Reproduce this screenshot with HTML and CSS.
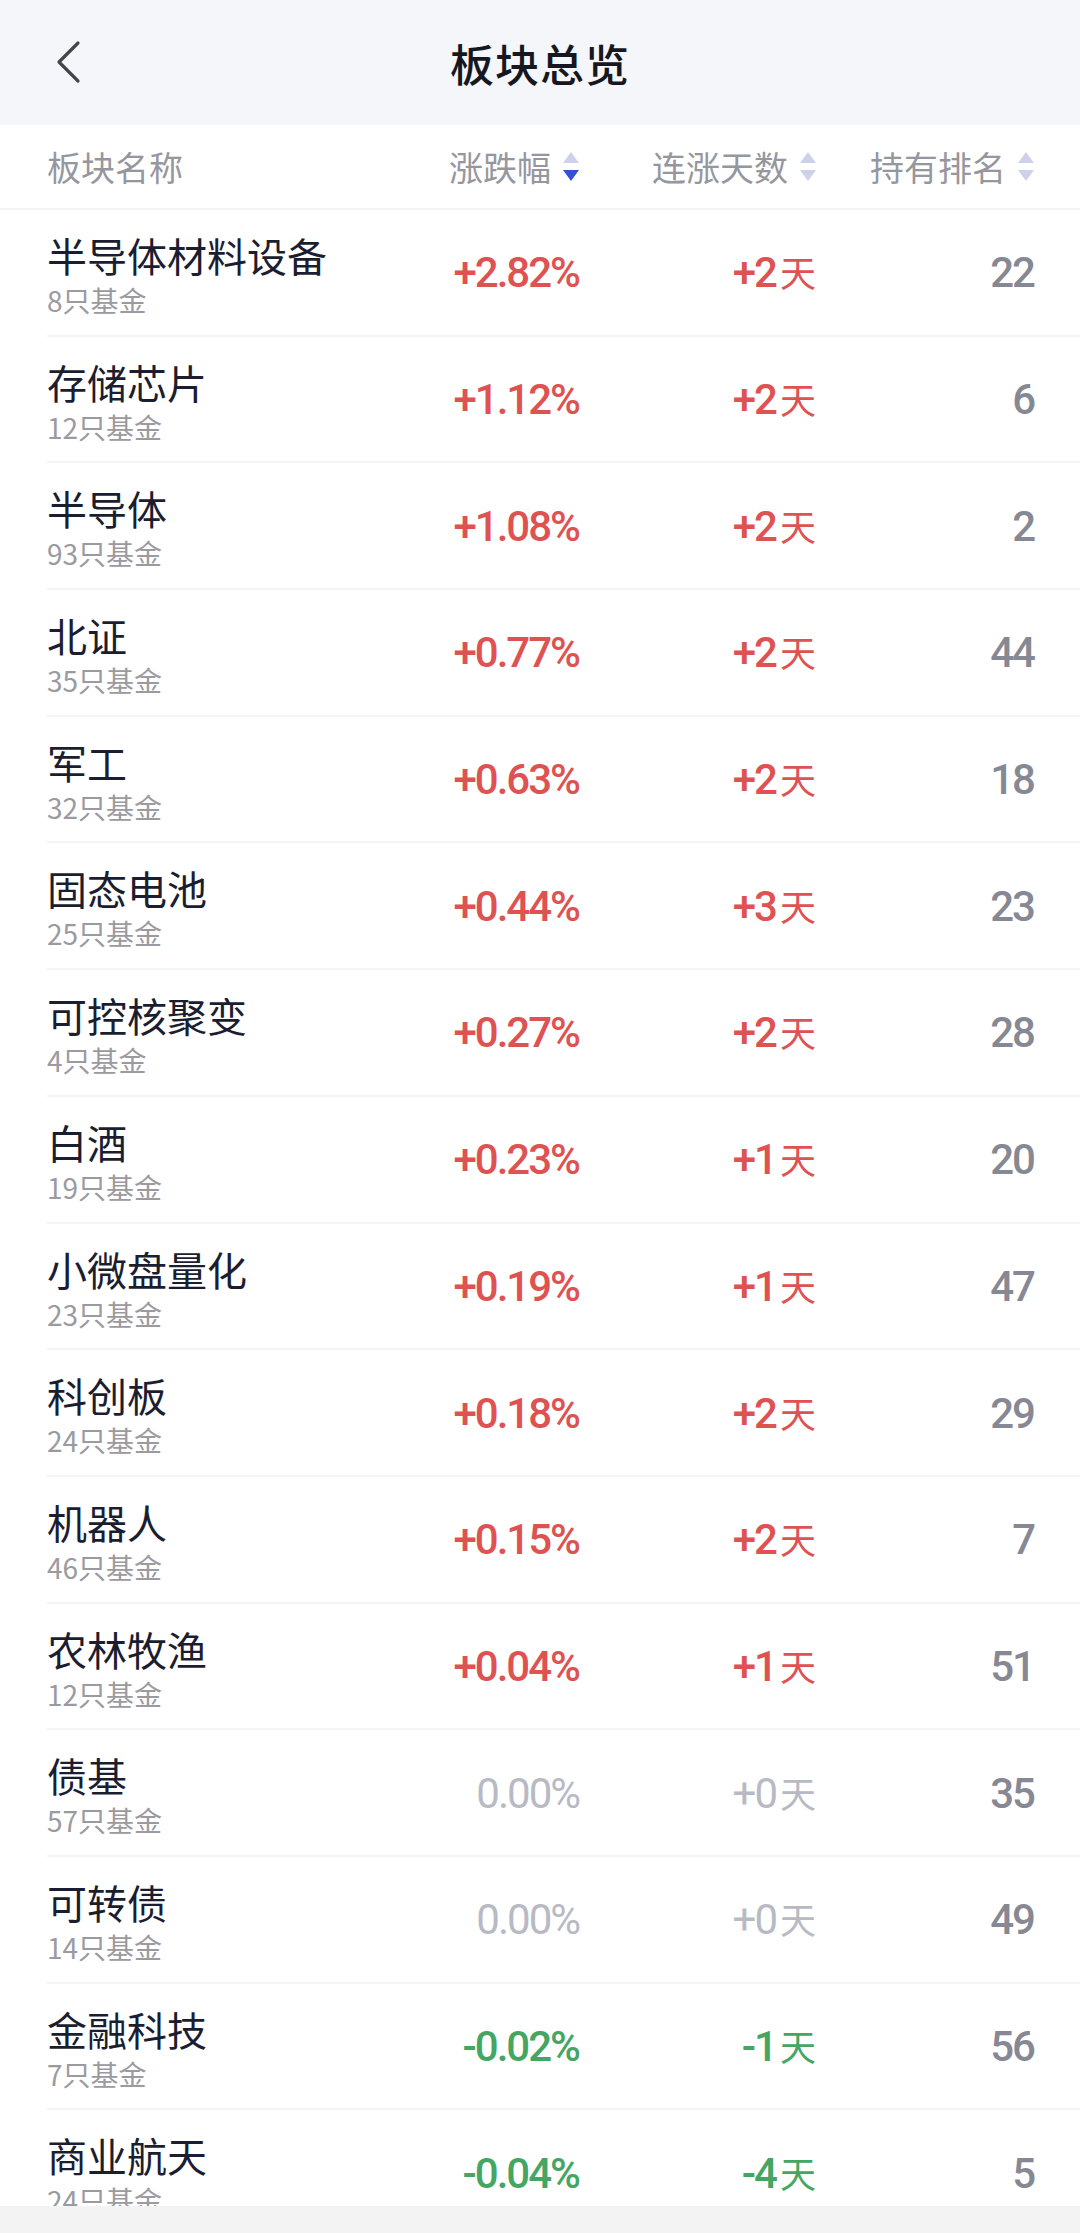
FILE: index.html
```html
<!DOCTYPE html>
<html lang="zh-CN">
<head>
  <meta charset="UTF-8" />
  <meta name="viewport" content="width=device-width, initial-scale=1.0"/>
  <title>板块总览</title>
  <link rel="stylesheet" href="styles.css">
</head>
<body>
  <div class="page">
    <header class="topbar">
      <span class="back">
        <svg width="30" height="44" viewBox="0 0 30 44"><polyline points="25,3 6,22 25,41" fill="none" stroke="#43454d" stroke-width="3.2" stroke-linecap="round" stroke-linejoin="round"/></svg>
      </span>
      <h1>板块总览</h1>
    </header>

    <div class="thead">
      <div class="th name">板块名称</div>
      <div class="th">涨跌幅<i class="sort down"></i></div>
      <div class="th">连涨天数<i class="sort"></i></div>
      <div class="th">持有排名<i class="sort"></i></div>
    </div>

    <div class="list" id="list"></div>

    <div class="bottombar"></div>
  </div>

  <script>
    const rows = [
      ['半导体材料设备', 8, '+2.82%', '+2', 22],
      ['存储芯片', 12, '+1.12%', '+2', 6],
      ['半导体', 93, '+1.08%', '+2', 2],
      ['北证', 35, '+0.77%', '+2', 44],
      ['军工', 32, '+0.63%', '+2', 18],
      ['固态电池', 25, '+0.44%', '+3', 23],
      ['可控核聚变', 4, '+0.27%', '+2', 28],
      ['白酒', 19, '+0.23%', '+1', 20],
      ['小微盘量化', 23, '+0.19%', '+1', 47],
      ['科创板', 24, '+0.18%', '+2', 29],
      ['机器人', 46, '+0.15%', '+2', 7],
      ['农林牧渔', 12, '+0.04%', '+1', 51],
      ['债基', 57, '0.00%', '+0', 35],
      ['可转债', 14, '0.00%', '+0', 49],
      ['金融科技', 7, '-0.02%', '-1', 56],
      ['商业航天', 24, '-0.04%', '-4', 5]
    ];

    const list = document.getElementById('list');

    function tone(v) {
      if (v.startsWith('+') && v !== '+0') return 'up';
      if (v.startsWith('-')) return 'down';
      return 'flat';
    }

    rows.forEach(([name, count, pct, days, rank]) => {
      const row = document.createElement('div');
      row.className = 'row';
      const pctTone = pct === '0.00%' ? 'flat' : tone(pct);
      row.innerHTML = `
        <div class="cell name">
          <div class="title">${name}</div>
          <div class="sub">${count}只基金</div>
        </div>
        <div class="cell num ${pctTone}">${pct}</div>
        <div class="cell num ${tone(days)}">${days}<span class="unit">天</span></div>
        <div class="cell num rank">${rank}</div>`;
      list.appendChild(row);
    });
  </script>
</body>
</html>
```

FILE: styles.css
```css
* { box-sizing: border-box; }
body {
  margin: 0;
  font-family: "Noto Sans CJK SC", "Noto Sans", sans-serif;
  background: #fff;
}
.page {
  width: 1080px;
  height: 2233px;
  display: flex;
  flex-direction: column;
  overflow: hidden;
}
.topbar {
  height: 125px;
  flex: none;
  background: #f5f6fa;
  display: flex;
  align-items: center;
  justify-content: center;
  position: relative;
}
.back {
  position: absolute;
  left: 53px;
  top: 40px;
  width: 30px;
  height: 44px;
}
.topbar h1 {
  margin: 0;
  font-size: 44px;
  font-weight: 500;
  color: #17181f;
  letter-spacing: 1px;
}
.thead, .row {
  display: grid;
  grid-template-columns: 1fr 200px 237px 218px;
  padding: 0 46px 0 47px;
}
.thead {
  height: 85px;
  flex: none;
  align-items: center;
  border-bottom: 2px solid #f1f1f4;
}
.th {
  display: flex;
  align-items: center;
  justify-content: flex-end;
  font-size: 34px;
  color: #96979e;
}
.th.name { justify-content: flex-start; }
.sort {
  width: 16px;
  height: 34px;
  margin-left: 12px;
  display: flex;
  flex-direction: column;
  justify-content: center;
  gap: 7px;
}
.sort::before, .sort::after {
  content: "";
  width: 0;
  height: 0;
  border-left: 8px solid transparent;
  border-right: 8px solid transparent;
}
.sort::before { border-bottom: 11px solid #cfd1ea; }
.sort::after { border-top: 11px solid #cfd1ea; }
.sort.down::after { border-top-color: #3550d6; }
.list {
  flex: 1;
  overflow: hidden;
}
.row {
  height: 126.7px;
  align-items: center;
  position: relative;
}
.row::after {
  content: "";
  position: absolute;
  left: 47px;
  right: 0;
  bottom: 0;
  border-bottom: 2px solid #f4f4f6;
}
.cell.name {
  align-self: start;
  padding-top: 23px;
}
.title {
  font-size: 40px;
  line-height: 44px;
  color: #1b1d30;
}
.sub {
  font-size: 28px;
  line-height: 32px;
  margin-top: 7px;
  color: #9a9aa0;
}
.num {
  text-align: right;
  font-family: Roboto, "Noto Sans CJK SC", sans-serif;
  font-size: 42px;
  font-weight: 500;
  letter-spacing: -2px;
  line-height: 1;
}
.unit {
  font-family: "Noto Sans CJK SC", sans-serif;
  font-size: 36px;
  font-weight: 400;
  letter-spacing: 0;
  margin-left: 4px;
}
.up { color: #de5252; }
.down { color: #44a662; }
.flat { color: #b8bac3; font-weight: 400; }
.rank { color: #868893; }
.bottombar {
  height: 27px;
  flex: none;
  background: #f3f3f4;
}
```
